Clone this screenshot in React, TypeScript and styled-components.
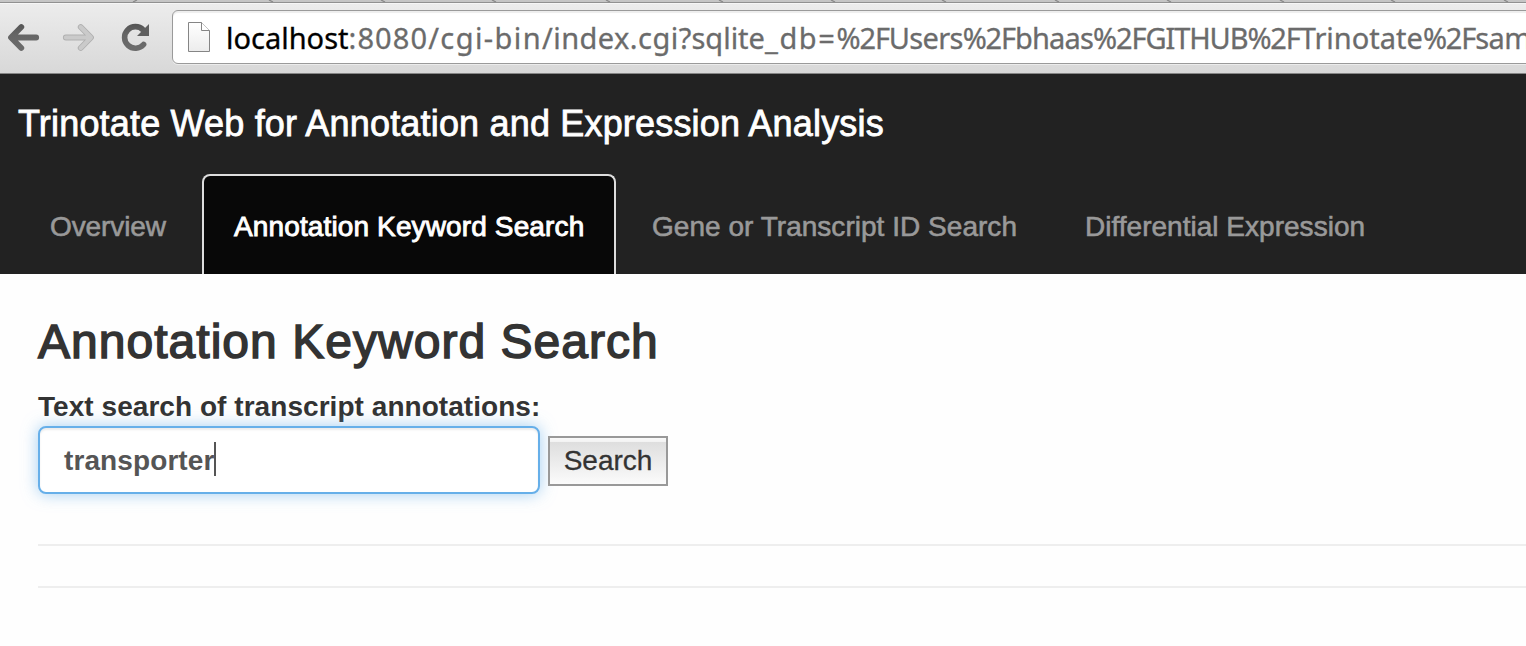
import React from "react";
import styled, { createGlobalStyle } from "styled-components";

const Global = createGlobalStyle`
  * { box-sizing: border-box; }
  html, body { margin: 0; padding: 0; background: #fefefe; overflow: hidden; }
  body { font-family: "Liberation Sans", Arial, sans-serif; color: #333; }
`;

const Page = styled.div`
  width: 100%;
  height: 646px;
  overflow: hidden;
`;

const TabStrip = styled.svg`
  display: block;
  width: 1526px;
  height: 3px;
`;

const Toolbar = styled.div`
  height: 71px;
  display: flex;
  align-items: flex-start;
  padding: 7px 0 0 7px;
  background: linear-gradient(#ececec, #d8d8d8);
  border-top: 1px solid #f6f6f6;
  border-bottom: 1px solid #868686;
  overflow: hidden;
`;

const NavIcons = styled.svg`
  flex: none;
  width: 150px;
  height: 36px;
  margin: 9px 15px 0 0;
`;

const AddressBar = styled.div`
  flex: none;
  width: 1400px;
  height: 54px;
  margin-top: -1px;
  display: flex;
  align-items: center;
  padding-left: 14px;
  background: #fff;
  border: 1px solid #9a9a9a;
  border-radius: 6px;
  box-shadow: inset 0 2px 1px #eee, 0 1px 0 #ececec;
`;

const PageIcon = styled.svg`
  flex: none;
  width: 24px;
  height: 32px;
  margin-right: 15px;
`;

const Url = styled.span<{ $strong?: boolean; $spacing: number }>`
  padding-top: 2px;
  font-family: "Noto Sans", sans-serif;
  font-size: 29px;
  line-height: 50px;
  white-space: nowrap;
  color: ${(p) => (p.$strong ? "#000" : "#6b6b6b")};
  -webkit-text-stroke: 0.3px ${(p) => (p.$strong ? "#000" : "#6b6b6b")};
  letter-spacing: ${(p) => p.$spacing}px;
`;

const Navbar = styled.header`
  height: 200px;
  background: #222;
  display: flex;
  flex-direction: column;
  justify-content: space-between;
  padding-left: 18px;
`;

const Brand = styled.div`
  padding-top: 30px;
  font-size: 36px;
  line-height: 40px;
  letter-spacing: 0.18px;
  color: #fff;
  -webkit-text-stroke: 0.8px #fff;
  white-space: nowrap;
`;

const Tabs = styled.nav`
  display: flex;
  gap: 4px;
`;

const Tab = styled.a<{ $active?: boolean; $width: number; $spacing: number }>`
  width: ${(p) => p.$width}px;
  height: 100px;
  padding: 31px 0 0 30px;
  border: 2px solid ${(p) => (p.$active ? "#ddd" : "transparent")};
  border-bottom: 0;
  border-radius: 8px 8px 0 0;
  background: ${(p) => (p.$active ? "#080808" : "transparent")};
  color: ${(p) => (p.$active ? "#fff" : "#999")};
  -webkit-text-stroke: ${(p) => (p.$active ? "0.9px #fff" : "0.6px #999")};
  font-size: 28px;
  line-height: 40px;
  letter-spacing: ${(p) => p.$spacing}px;
  white-space: nowrap;
`;

const Main = styled.main`
  padding: 41px 0 0 38px;
`;

const Heading = styled.h1`
  margin: 0;
  font-size: 48px;
  line-height: 54px;
  font-weight: 400;
  letter-spacing: 1.03px;
  -webkit-text-stroke: 1.5px #333;
  white-space: nowrap;
`;

const Label = styled.label`
  display: block;
  margin-top: 18px;
  height: 39px;
  font-size: 28px;
  line-height: 40px;
  font-weight: 700;
  letter-spacing: 0.05px;
  white-space: nowrap;
`;

const SearchRow = styled.div`
  display: flex;
  align-items: flex-start;
  gap: 8px;
`;

const Field = styled.div`
  width: 502px;
  height: 68px;
  display: flex;
  align-items: center;
  padding-left: 24px;
  background: #fff;
  border: 2px solid #66afe9;
  border-radius: 8px;
  box-shadow: inset 0 2px 2px rgba(0, 0, 0, 0.075), 0 0 16px rgba(102, 175, 233, 0.6);
  color: #555;
  font-size: 28px;
  line-height: 34px;
  font-weight: 700;
  letter-spacing: 0.1px;
`;

const Typed = styled.span`
  padding-top: 2px;
`;

const Caret = styled.span`
  width: 2px;
  height: 34px;
  margin-bottom: 2px;
  background: #555;
`;

const Button = styled.button`
  width: 120px;
  height: 50px;
  margin-top: 10px;
  padding: 0;
  border: 2px solid #999;
  border-radius: 0;
  background: linear-gradient(#fafafa 0, #f2f2f2 4px, #dedede 4px, #fbfbfb 100%);
  font-family: "Liberation Sans", Arial, sans-serif;
  font-size: 28px;
  line-height: 46px;
  color: #333;
  -webkit-text-stroke: 0.3px #333;
`;

const Rule = styled.hr<{ $gap: number }>`
  height: 2px;
  margin: ${(p) => p.$gap}px 0 0;
  border: 0;
  background: #eee;
`;

const tabEdges = [273, 385, 496, 610, 723, 835, 946, 1059, 1171, 1284, 1395, 1508];

const urlParts: [string, number][] = [
  [":8080", 1.1],
  ["/cgi-bin", 1.4],
  ["/index", 0.45],
  [".cgi", 0.5],
  ["?sqlite", 0],
  ["_db=", 1.6],
  ["%2F", -1.15],
  ["Users", -0.7],
  ["%2F", -1.15],
  ["bhaas", -0.8],
  ["%2F", -1.15],
  ["GITHUB", -1.1],
  ["%2F", -1.15],
  ["Trinotate", 0],
  ["%2F", -1.15],
  ["sam", -0.5],
];

export default function App() {
  return (
    <Page>
      <Global />
      <TabStrip viewBox="0 0 1526 3">
        <rect width="1526" height="3" fill="#c5c5c5" />
        <path d="M137 0L133 2" stroke="#888" strokeWidth="1.3" />
        {tabEdges.map((x) => (
          <path key={x} d={`M${x - 4} 0 L${x} 2`} stroke="#888" strokeWidth="1.3" />
        ))}
        <rect y="2" width="1526" height="1" fill="#919191" />
      </TabStrip>
      <Toolbar>
        <NavIcons viewBox="7 20 150 36" fill="none" strokeLinecap="round" strokeLinejoin="round">
          <defs>
            <linearGradient id="ink" gradientUnits="userSpaceOnUse" x1="0" y1="24" x2="0" y2="51">
              <stop stopColor="#555" />
              <stop offset="0.4" stopColor="#666" />
              <stop offset="1" stopColor="#6c6c6c" />
            </linearGradient>
          </defs>
          <path d="M36.2 37.5H12M21.3 27L11 37.5L21.3 48" stroke="url(#ink)" strokeWidth="5.8" />
          <path d="M65.8 37.5H90M80.7 27L91 37.5L80.7 48" stroke="#b0b0b0" strokeWidth="5.8" />
          <path d="M65.8 37.5H90M80.7 27L91 37.5L80.7 48" stroke="#cacaca" strokeWidth="4" />
          <path d="M143.6 44.5A10.8 10.8 0 1 1 143.2 30" stroke="url(#ink)" strokeWidth="5.6" />
          <path d="M149 24V36H137Z" fill="#606060" />
        </NavIcons>
        <AddressBar>
          <PageIcon viewBox="0 0 24 32">
            <defs>
              <linearGradient id="sheet" x2="0" y2="1">
                <stop stopColor="#fff" />
                <stop offset="1" stopColor="#ececec" />
              </linearGradient>
            </defs>
            <path d="M1.5 1.5H14.5L22.5 9.5V30.5H1.5Z" fill="url(#sheet)" stroke="#858585" />
            <path d="M14.5 1.5V9.5H22.5" fill="#fff" stroke="#858585" />
          </PageIcon>
          <Url $strong $spacing={0}>localhost</Url>
          {urlParts.map(([text, spacing], i) => (
            <Url key={i} $spacing={spacing}>{text}</Url>
          ))}
        </AddressBar>
      </Toolbar>
      <Navbar>
        <Brand>Trinotate Web for Annotation and Expression Analysis</Brand>
        <Tabs>
          <Tab $width={180} $spacing={-0.1}>Overview</Tab>
          <Tab $active $width={414} $spacing={0.13}>Annotation Keyword Search</Tab>
          <Tab $width={429} $spacing={0.03}>Gene or Transcript ID Search</Tab>
          <Tab $width={344} $spacing={0.02}>Differential Expression</Tab>
        </Tabs>
      </Navbar>
      <Main>
        <Heading>Annotation Keyword Search</Heading>
        <Label>Text search of transcript annotations:</Label>
        <SearchRow>
          <Field>
            <Typed>transporter</Typed>
            <Caret />
          </Field>
          <Button>Search</Button>
        </SearchRow>
        <Rule $gap={50} />
        <Rule $gap={40} />
      </Main>
    </Page>
  );
}
